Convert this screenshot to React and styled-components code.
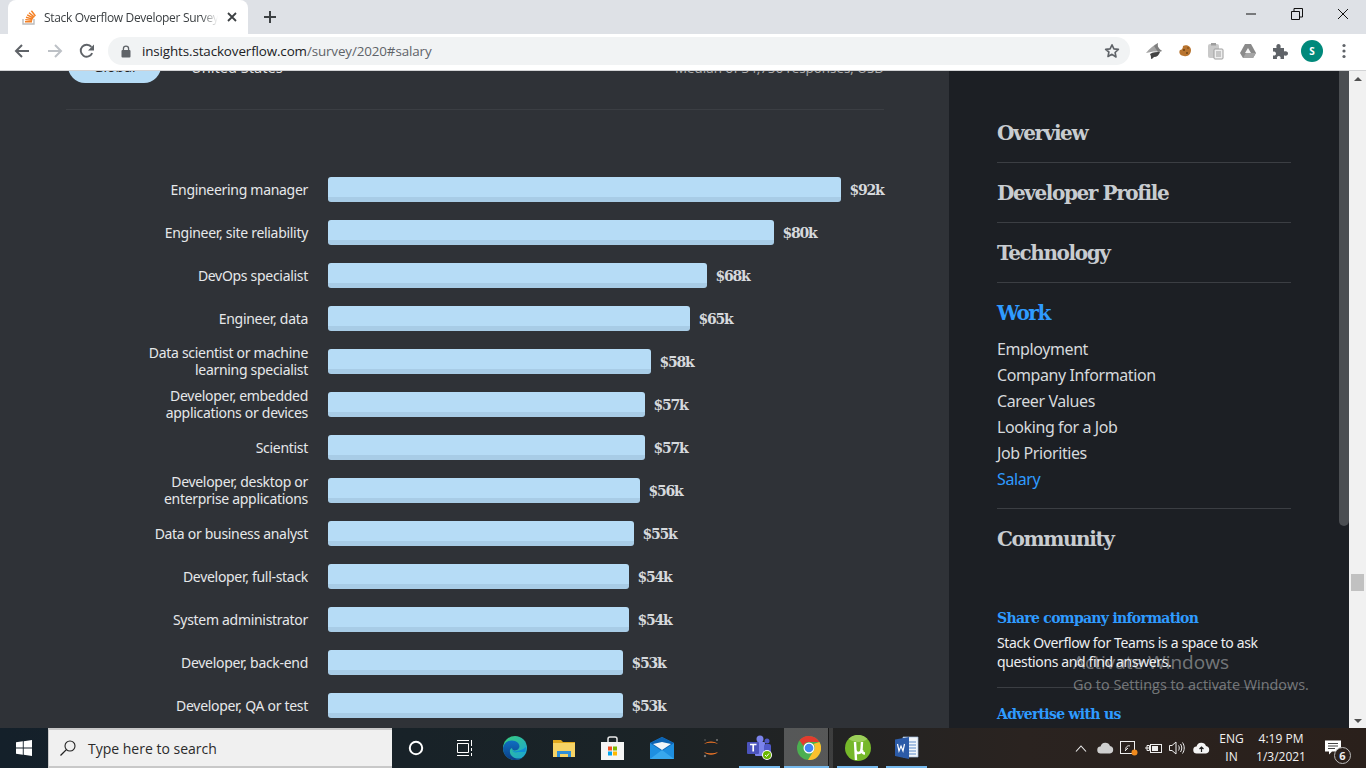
import React from "react";
import styled, { createGlobalStyle } from "styled-components";

const Global = createGlobalStyle`
  html, body { margin: 0; padding: 0; height: 100%; overflow: hidden; background: #2f3237; }
  * { box-sizing: border-box; }
  #root { height: 768px; }
`;

const UI = `"Open Sans", "Noto Sans", sans-serif`;
const BODY = `"Noto Sans", "Open Sans", sans-serif`;
const SLAB = `"DejaVu Serif", "Liberation Serif", serif`;

const Screen = styled.div`
  position: relative; width: 1366px; height: 768px; display: flex; flex-direction: column; overflow: hidden;
`;
const TabStrip = styled.div`
  height: 34px; background: #dee1e6; display: flex; align-items: flex-end; padding-left: 8px;
`;
const Tab = styled.div`
  width: 240px; height: 34px; background: #fff; border-radius: 8px 8px 0 0; display: flex; align-items: center; padding: 0 11px 0 13px;
`;
const TabTitle = styled.span`
  flex: 1; margin: 0 9px 0 7px; width: 170px; white-space: nowrap; overflow: hidden; font: 12px ${UI}; color: #3c4043; letter-spacing: -0.32px;
  -webkit-mask-image: linear-gradient(90deg, #000 90%, transparent 100%);
  mask-image: linear-gradient(90deg, #000 90%, transparent 100%);
`;
const NewTab = styled.div`
  width: 28px; height: 28px; margin-left: 8px; margin-bottom: 3px; display: flex; align-items: center; justify-content: center;
`;
const WindowControls = styled.div`
  margin-left: auto; height: 34px; display: flex;
`;
const WinBtn = styled.div`
  width: 46px; height: 28px; display: flex; align-items: center; justify-content: center;
`;
const Toolbar = styled.div`
  height: 37px; background: #fff; border-bottom: 1px solid #d2d3d5; display: flex; align-items: center; padding: 0 6px 2px 6px;
`;
const ToolBtn = styled.div`
  width: ${p => p.$w || 32}px; height: 28px; flex: none; display: flex; align-items: center; justify-content: center;
`;
const Address = styled.div`
  width: 1022px; height: 28px; margin: 0 8px 0 6px; border-radius: 14px; background: #f1f3f4; display: flex; align-items: center; padding: 0 10px 0 13px;
`;
const Url = styled.span`
  margin-left: 11px; flex: 1; font: 13.4px ${UI}; letter-spacing: -0.12px; color: #5f6368; white-space: nowrap;
  b { font-weight: 400; color: #202124; }
`;
const Avatar = styled.div`
  width: 22px; height: 22px; border-radius: 50%; background: #00897b; color: #fff; font: 700 10px ${UI}; display: flex; align-items: center; justify-content: center;
`;

const Viewport = styled.div`
  position: relative; flex: 1; min-height: 0; display: flex; overflow: hidden;
`;
const Article = styled.main`
  width: 949px; flex: none; background: #2f3237; padding-left: 66px; overflow: hidden;
`;
const Filters = styled.div`
  width: 818px; margin-top: -22px; padding-bottom: 26px; border-bottom: 1px solid #3b3e43; display: flex; align-items: center;
`;
const Pill = styled.div`
  width: 93px; height: 34px; margin-left: 2px; padding-top: 1px; border-radius: 17px; background: #b6dcf6; color: #222; font: 14px ${BODY}; display: flex; align-items: center; justify-content: center;
`;
const FilterText = styled.div`
  margin-left: 30px; padding-top: 1px; color: #ddd; font: 14.6px ${BODY};
`;
const FilterNote = styled.div`
  margin-left: auto; padding-top: 3px; color: #aaa; font: 13.3px ${BODY};
`;
const Chart = styled.div`
  padding-top: 67px; display: flex; flex-direction: column; gap: 18px;
`;
const Row = styled.div`
  display: flex; align-items: center; height: 25px;
`;
const Label = styled.div`
  width: 242px; flex: none; text-align: right; white-space: pre-line; font: 14px/17px ${BODY}; letter-spacing: -0.3px; color: #e6e8ea;
  ${p => p.$double ? "margin-top: -1px; margin-bottom: 1px;" : ""}
`;
const Bar = styled.div`
  height: 25px; margin-left: 20px; border-radius: 3px; background: #b6dcf6; border-bottom: 5px solid #a8cce6;
`;
const Value = styled.div`
  margin-left: 8.5px; font: 700 14px ${SLAB}; letter-spacing: -1.2px; color: #d6d9dc;
`;

const Side = styled.aside`
  width: 400px; flex: none; background: #1c1f24; padding-left: 48px; overflow: hidden;
`;
const SideInner = styled.div`
  width: 294px;
`;
const Section = styled.div`
  padding: ${p => p.$open ? "0 0 16px" : "0"};
  border-bottom: ${p => p.$last ? "0" : "1px solid #3b3e43"};
`;
const Heading = styled.div`
  height: ${p => p.$first ? "91px" : "59px"}; padding-top: ${p => p.$first ? "32px" : "0"}; font: 700 20px/61px ${SLAB}; letter-spacing: -1.4px;
  color: ${p => p.$active ? "#2f9bff" : "#c8ccd0"};
`;
const SubList = styled.div`
  display: flex; flex-direction: column; margin-top: -6px;
`;
const SubLink = styled.div`
  height: 26px; font: 16px/26px ${BODY}; letter-spacing: -0.4px; color: ${p => p.$active ? "#2f9bff" : "#d6d9dc"};
`;
const Promo = styled.div`
  margin-top: 40px;
`;
const PromoTitle = styled.div`
  font: 700 14px/20px ${SLAB}; letter-spacing: -0.7px; color: #2f9bff;
`;
const PromoText = styled.div`
  margin-top: 5px; padding-bottom: 16px; border-bottom: 1px solid #3b3e43; font: 14px/19px ${BODY}; letter-spacing: -0.37px; color: #eceef0; white-space: pre-line;
`;
const PromoNext = styled(PromoTitle)`
  margin-top: 16px;
`;
const PageThumb = styled.div`
  position: absolute; left: 1339px; top: 0; width: 10px; height: 455px; background: #4b4e52; border-radius: 0 0 5px 5px;
`;
const Track = styled.div`
  flex: 1; background: #f1f1f1; display: flex; flex-direction: column; align-items: center; justify-content: space-between; padding: 6px 0 5px; position: relative;
`;
const Arrow = styled.div`
  width: 0; height: 0; border-left: 4px solid transparent; border-right: 4px solid transparent;
  ${p => p.$up ? "border-bottom: 4px solid #505050;" : "border-top: 4px solid #505050;"}
`;
const TrackThumb = styled.div`
  position: absolute; left: 2px; top: 503px; width: 13px; height: 17px; background: #c1c1c1;
`;

const Taskbar = styled.footer`
  height: 40px; flex: none; display: flex; align-items: stretch; background: linear-gradient(90deg, #14202a 0%, #1a2327 45%, #2a2320 75%, #2a201b 100%);
`;
const Start = styled.div`
  width: 48px; display: flex; align-items: center; justify-content: center;
`;
const Search = styled.div`
  width: 344px; background: #f0f0f0; border: 2px solid #c8c8c8; border-right: 0; border-left-width: 1px; display: flex; align-items: center; padding-left: 11px;
  font: 14px ${UI}; color: #2b2b2b;
  span { margin-left: 12px; }
`;
const TaskBtn = styled.div`
  position: relative; width: ${p => p.$w || 49}px; flex: none; display: flex; align-items: center; justify-content: center;
  ${p => p.$current ? "background: linear-gradient(90deg, rgba(255,255,255,.24) 0 44px, rgba(0,0,0,.3) 44px 45px, rgba(255,255,255,.12) 45px);" : ""}
  ${p => p.$open ? `&::after { content: ""; position: absolute; left: ${p.$current ? 0 : 4}px; right: 4px; bottom: 0; height: 2px; background: #76b9ed; }` : ""}
`;
const Tray = styled.div`
  margin-left: auto; display: flex; align-items: stretch;
`;
const TrayIcon = styled.div`
  width: 24px; display: flex; align-items: center; justify-content: center;
`;
const TrayText = styled.div`
  width: ${p => p.$w}px; display: flex; flex-direction: column; align-items: center; justify-content: center; font: 12px/18px ${UI}; color: #f2f2f2;
`;
const Notify = styled.div`
  position: relative; width: 54px; display: flex; align-items: center; padding-left: 13px;
`;
const Badge = styled.div`
  position: absolute; left: 22px; top: 19px; width: 17px; height: 17px; border-radius: 50%; border: 1px solid #bbb; background: #2a201b; color: #eee; font: 700 11px/15px ${UI}; text-align: center;
`;
const Watermark = styled.div`
  position: absolute; left: 1073px; top: 648px; color: rgba(255,255,255,.4); font-family: ${UI}; pointer-events: none;
`;
const WmTitle = styled.div`font-size: 19px; line-height: 28px;`;
const WmSub = styled.div`font-size: 14.4px; line-height: 20px; margin-top: -1px; white-space: nowrap;`;

const rows = [
  ["Engineering manager", 513, "$92k"],
  ["Engineer, site reliability", 446, "$80k"],
  ["DevOps specialist", 379, "$68k"],
  ["Engineer, data", 362, "$65k"],
  ["Data scientist or machine\nlearning specialist", 323, "$58k"],
  ["Developer, embedded\napplications or devices", 317, "$57k"],
  ["Scientist", 317, "$57k"],
  ["Developer, desktop or\nenterprise applications", 312, "$56k"],
  ["Data or business analyst", 306, "$55k"],
  ["Developer, full-stack", 301, "$54k"],
  ["System administrator", 301, "$54k"],
  ["Developer, back-end", 295, "$53k"],
  ["Developer, QA or test", 295, "$53k"],
];
const subs = ["Employment", "Company Information", "Career Values", "Looking for a Job", "Job Priorities"];

const Ico = ({ s = 16, w, h, children, vb }) => (
  <svg width={w || s} height={h || s} viewBox={vb || `0 0 ${w || s} ${h || s}`} fill="none">{children}</svg>
);

const SOIcon = () => (
  <Ico s={16}>
    <path d="M2 10v5h11v-5" stroke="#bcbbbb" strokeWidth="1.4" />
    <path d="M4 12.7h7M4.3 10.6l6.9.7M5 8.3l6.7 1.8M6.2 5.9l6.2 3.1M8 3.8l5.4 4.3M10.4 1.8l4 5.2" stroke="#f48024" strokeWidth="1.4" />
  </Ico>
);
const XIcon = ({ s = 10, c = "#3c4043", sw = 1.8 }) => (
  <Ico s={s}><path d={`M1 1L${s - 1} ${s - 1}M${s - 1} 1L1 ${s - 1}`} stroke={c} strokeWidth={sw} /></Ico>
);
const Back = ({ c = "#5f6368", flip }) => (
  <Ico s={16}><g transform={flip ? "matrix(-1 0 0 1 16 0)" : undefined}><path d="M15 8H2.5M8 2L2 8l6 6" stroke={c} strokeWidth="2" /></g></Ico>
);
const Reload = () => (
  <Ico s={16}>
    <path d="M13.2 10.2A6 6 0 1 1 12.4 3.9" stroke="#5f6368" strokeWidth="1.9" />
    <path d="M15 1.5v6H9z" fill="#5f6368" />
  </Ico>
);
const Lock = () => (
  <Ico w={10} h={13}>
    <path d="M2.4 6V3.8a2.6 2.6 0 0 1 5.2 0V6" stroke="#5f6368" strokeWidth="1.3" />
    <rect x="0.5" y="5" width="9" height="7.5" rx="1" fill="#5f6368" />
  </Ico>
);
const Star = () => (
  <Ico s={16}><path d="M8 1.8l1.9 4.1 4.5.5-3.3 3.1.9 4.5L8 11.3l-4 2.2.9-4.5L1.6 6.4l4.5-.5z" stroke="#5f6368" strokeWidth="1.6" strokeLinejoin="round" /></Ico>
);
const ExtShark = () => (
  <Ico s={20}>
    <path d="M2 12C5 8 10 4 14 2c-1 3 0 5 4 8l-3 1c-4-1-8 0-13 1z" fill="#a3a3a3" />
    <path d="M10 5l4-3c-1 3 0 5 4 8l-4 1z" fill="#7d7d7d" />
    <path d="M6 13c3-2 7-2 10-2-1 3-3 5-6 5-1 1-2 2-3 2 0-2 0-3-1-5z" fill="#444" />
  </Ico>
);
const ExtCookie = () => (
  <Ico s={14}>
    <path d="M5 2c3-2 8 0 8 4 0 4-3 7-7 6C3 12 0 9 2 6c2 0 3-2 3-4z" fill="#b8742f" />
    <circle cx="6" cy="6" r="1" fill="#6e4316" /><circle cx="9" cy="9" r="1" fill="#6e4316" /><circle cx="10" cy="4" r=".8" fill="#6e4316" />
  </Ico>
);
const ExtClip = () => (
  <Ico s={18}>
    <rect x="1" y="2" width="11" height="14" rx="2" fill="#c9c9c9" />
    <rect x="4" y="1" width="5" height="2.5" fill="#9e9e9e" />
    <rect x="7" y="7" width="9" height="10" rx="1" fill="#eee" stroke="#9e9e9e" />
    <path d="M9 10h5M9 12h5M9 14h5" stroke="#9e9e9e" />
  </Ico>
);
const ExtDrive = () => (
  <Ico s={18}>
    <path d="M6 2h6l5 9-3 5H4l-3-5z" fill="#8a8a8a" />
    <path d="M9 6l3 5H6z" fill="#f5f5f5" />
    <path d="M4 16l3-5h10l-3 5z" fill="#a5a5a5" />
  </Ico>
);
const Puzzle = () => (
  <Ico s={16}>
    <path d="M1 5h3.500c-.6-3 .5-4 2-4s2.600 1 2 4H12v3.500c3-.6 4 .5 4 2s-1 2.600-4 2V16H8.500c.5-2.200-.5-3-1.700-3s-2.300.8-1.800 3H1v-3.500c2 .4 3-.5 3-1.800S3 8 1 8.700z" fill="#5f6368" />
  </Ico>
);
const Dots = () => (
  <Ico w={4} h={16}>
    <circle cx="2" cy="2.500" r="1.600" fill="#5f6368" /><circle cx="2" cy="8" r="1.600" fill="#5f6368" /><circle cx="2" cy="13.500" r="1.600" fill="#5f6368" />
  </Ico>
);
const Minimize = () => <Ico w={12} h={2}><path d="M1 1h10" stroke="#111" /></Ico>;
const Restore = () => (
  <Ico s={12}><path d="M.5 3.500h8v8h-8zM3 3.500V.5h8.500V9H8.500" stroke="#111" /></Ico>
);
const WinLogo = () => (
  <Ico s={16}><path d="M0 2.300L6.800 1.300v6.300H0zM7.700 1.200L16 0v7.600H7.700zM0 8.500h6.800v6.200L0 13.800zM7.700 8.500H16V16l-8.300-1.200z" fill="#fff" /></Ico>
);
const SearchGlass = () => (
  <Ico s={16}>
    <circle cx="10" cy="6" r="5" stroke="#222" strokeWidth="1.100" />
    <path d="M6.400 9.600L.5 15.500" stroke="#222" strokeWidth="1.300" />
  </Ico>
);
const Cortana = () => <Ico s={16}><circle cx="8" cy="8" r="6.200" stroke="#fff" strokeWidth="2" /></Ico>;
const TaskView = () => (
  <Ico s={16}>
    <path d="M.5 3.500h11v9H.5zM0 .5h12M0 15.500h12M14.500 0v6M14.500 8v3M14.500 13v3" stroke="#fff" />
  </Ico>
);
const Edge = () => (
  <svg width="24" height="24" viewBox="0 0 24 24">
    <defs>
      <linearGradient id="e1" x1="0" y1="0" x2="1" y2="1"><stop offset="0" stopColor="#3ad07a" /><stop offset="1" stopColor="#1aa0d8" /></linearGradient>
      <linearGradient id="e2" x1="0" y1="0" x2="0" y2="1"><stop offset="0" stopColor="#0f6fc2" /><stop offset="1" stopColor="#0c3f86" /></linearGradient>
    </defs>
    <circle cx="12" cy="12" r="12" fill="url(#e1)" />
    <path d="M0 12c1-6 7-9 12-7 5 2 6 7 2 9-3 1-5 0-5-2-3 1-3 6 1 9 3 2 8 2 11 0-2 2-6 3-9 3C5 24 0 19 0 12z" fill="url(#e2)" />
    <path d="M9 13c0 2 3 3 5 2 3-1 6-1 9-4 0 1 0 3-1 5h-7c-3 1-6 0-6-3z" fill="#0f8cd6" />
  </svg>
);
const Folder = () => (
  <svg width="22" height="18" viewBox="0 0 22 18">
    <path d="M0 1h8l2 2h12v15H0z" fill="#e0a81e" />
    <path d="M0 4h22v14H0z" fill="#f6d365" />
    <path d="M4 12h14v6h-3v-3H7v3H4z" fill="#2f8fd8" />
  </svg>
);
const Store = () => (
  <svg width="23" height="24" viewBox="0 0 23 24">
    <path d="M7 7V3a2 2 0 0 1 2-2h5a2 2 0 0 1 2 2v4" fill="none" stroke="#e8e8e8" strokeWidth="1.500" />
    <rect x="0" y="6" width="23" height="18" fill="#f5f5f5" />
    <rect x="7" y="10.500" width="4" height="4" fill="#f25022" /><rect x="12" y="10.500" width="4" height="4" fill="#7fba00" />
    <rect x="7" y="15.500" width="4" height="4" fill="#00a4ef" /><rect x="12" y="15.500" width="4" height="4" fill="#ffb900" />
  </svg>
);
const Mail = () => (
  <svg width="24" height="22" viewBox="0 0 24 22">
    <path d="M0 6L12 0l12 6v16H0z" fill="#1e8fe0" />
    <path d="M0 6l12 8 12-8-12-6z" fill="#0c63b3" />
    <path d="M3 7l9-2 9 2-9 6z" fill="#f2f6fa" />
    <path d="M0 22l12-9 12 9z" fill="#38a8ee" />
  </svg>
);
const Jupyter = () => (
  <svg width="18" height="22" viewBox="0 0 18 22">
    <path d="M2 7c3-3.500 11-3.500 14 0-4-1.800-10-1.800-14 0zM2 15c3 3.500 11 3.500 14 0-4 1.800-10 1.800-14 0z" fill="#f37726" />
    <circle cx="3" cy="19" r="1.200" fill="#777" /><circle cx="15" cy="3" r="1" fill="#777" /><circle cx="3" cy="3" r=".7" fill="#777" />
  </svg>
);
const Teams = () => (
  <svg width="26" height="26" viewBox="0 0 26 26">
    <circle cx="13" cy="4" r="3.500" fill="#7b83eb" /><circle cx="20" cy="6" r="2.500" fill="#5059c9" />
    <rect x="8" y="7" width="10" height="14" rx="1" fill="#7b83eb" />
    <rect x="17" y="9" width="7" height="9" rx="2" fill="#5059c9" />
    <rect x="0" y="7" width="12" height="12" rx="1" fill="#4b53bc" />
    <path d="M3 9.500h6.500M6.200 9.500v7" stroke="#fff" strokeWidth="1.700" />
    <circle cx="20" cy="20" r="5" fill="#fff" /><circle cx="20" cy="20" r="4" fill="#6bb700" />
    <path d="M18 20l1.500 1.500 2.500-3" stroke="#fff" fill="none" />
  </svg>
);
const ChromeLogo = () => (
  <svg width="24" height="24" viewBox="0 0 24 24">
    <circle cx="12" cy="12" r="12" fill="#4caf50" />
    <path d="M12 0a12 12 0 0 1 10.400 6H12a6 6 0 0 0-5.600 4L2.400 4.300A12 12 0 0 1 12 0z" fill="#e33b2e" />
    <path d="M22.400 6A12 12 0 0 1 11 24l5.200-8.500A6 6 0 0 0 16.500 8z" fill="#fbc02d" />
    <circle cx="12" cy="12" r="5.500" fill="#fff" /><circle cx="12" cy="12" r="4.300" fill="#4285f4" />
  </svg>
);
const Torrent = () => (
  <svg width="26" height="26" viewBox="0 0 26 26">
    <circle cx="13" cy="13" r="13" fill="#76b82a" />
    <path d="M3.500 4a13 13 0 0 1 19 0c-5 4-13 4-19 0z" fill="#9ccf5a" />
    <path d="M10 7l1 18M10.500 15c0 4 5.500 4 6 0l.5-8M17 15c0 2 .5 3.500 3 3.500" stroke="#fff" strokeWidth="2.400" fill="none" />
  </svg>
);
const Word = () => (
  <svg width="24" height="24" viewBox="0 0 24 24">
    <path d="M8 1h15v20H8z" fill="#f2f6fb" stroke="#9db7d8" strokeWidth=".7" />
    <path d="M14 6h7M14 9h7M14 12h7M14 15h7M14 18h7" stroke="#5b8ac9" />
    <path d="M0 3.500L14 1v22L0 20z" fill="#2c5ba8" />
    <path d="M2.500 8l1.500 7 2-5 2 5 1.500-7" stroke="#fff" strokeWidth="1.200" fill="none" />
  </svg>
);
const Chevron = () => <Ico w={12} h={7}><path d="M1 6.500L6 1l5 5.500" stroke="#eee" strokeWidth="1.100" /></Ico>;
const Cloud = ({ c = "#cfcfcf", arrow }) => (
  <Ico w={17} h={12}>
    <path d="M4 11.500a3.500 3.500 0 0 1-.5-7A5 5 0 0 1 13 4a3.800 3.800 0 0 1 0 7.500z" fill={c} />
    {arrow && <path d="M8.500 10V5M6.500 7l2-2 2 2" stroke="#222" strokeWidth="1.200" />}
  </Ico>
);
const Meet = () => (
  <Ico w={18} h={16}>
    <rect x=".5" y="1.500" width="14" height="12" stroke="#eee" />
    <path d="M6 10c-1-3 2-5 4-4M5 11l3-3" stroke="#eee" />
    <circle cx="14.500" cy="12.500" r="3" fill="#f08a1d" />
  </Ico>
);
const Battery = () => (
  <Ico w={17} h={12}>
    <rect x="5.500" y="2.500" width="11" height="8" stroke="#eee" />
    <rect x="7" y="4" width="6" height="5" fill="#eee" />
    <path d="M0 6h4M2 3.500v5h2.500v-5z" stroke="#eee" />
  </Ico>
);
const Speaker = () => (
  <Ico w={16} h={14}>
    <path d="M.5 4.500h2.500L7 1v12L3 9.500H.5z" stroke="#eee" />
    <path d="M9.500 4.500c1 1.500 1 3.500 0 5M11.500 3c1.700 2.500 1.700 5.500 0 8M13.500 1.500c2.300 3.300 2.300 7.700 0 11" stroke="#eee" />
  </Ico>
);
const Comment = () => (
  <Ico w={16} h={16}>
    <path d="M0 .5h16v11H7l-3 3v-3H0z" fill="#fff" />
    <path d="M3 3.500h10M3 6h10M3 8.500h7" stroke="#444" />
  </Ico>
);

export default function App() {
  return (
    <Screen>
      <Global />
      <TabStrip>
        <Tab>
          <SOIcon />
          <TabTitle>Stack Overflow Developer Survey 2020</TabTitle>
          <XIcon />
        </Tab>
        <NewTab>
          <Ico s={14}><path d="M7 1v12M1 7h12" stroke="#3c4043" strokeWidth="2" /></Ico>
        </NewTab>
        <WindowControls>
          <WinBtn><Minimize /></WinBtn>
          <WinBtn><Restore /></WinBtn>
          <WinBtn><XIcon s={12} c="#111" sw={1} /></WinBtn>
        </WindowControls>
      </TabStrip>
      <Toolbar>
        <ToolBtn><Back /></ToolBtn>
        <ToolBtn $w={33}><Back flip c="#bdc1c6" /></ToolBtn>
        <ToolBtn $w={31}><Reload /></ToolBtn>
        <Address>
          <Lock />
          <Url><b>insights.stackoverflow.com</b>/survey/2020#salary</Url>
          <Star />
        </Address>
        <ToolBtn $w={31}><ExtShark /></ToolBtn>
        <ToolBtn $w={31}><ExtCookie /></ToolBtn>
        <ToolBtn $w={32}><ExtClip /></ToolBtn>
        <ToolBtn $w={32}><ExtDrive /></ToolBtn>
        <ToolBtn $w={32}><Puzzle /></ToolBtn>
        <ToolBtn $w={32}><Avatar>S</Avatar></ToolBtn>
        <ToolBtn $w={32}><Dots /></ToolBtn>
      </Toolbar>
      <Viewport>
        <Article>
          <Filters>
            <Pill>Global</Pill>
            <FilterText>United States</FilterText>
            <FilterNote>Median of 34,756 responses; USD</FilterNote>
          </Filters>
          <Chart>
            {rows.map(([label, width, value]) => (
              <Row key={label}>
                <Label $double={label.includes("\n")}>{label}</Label>
                <Bar style={{ width }} />
                <Value>{value}</Value>
              </Row>
            ))}
          </Chart>
        </Article>
        <Side>
          <SideInner>
            <Section><Heading $first>Overview</Heading></Section>
            <Section><Heading>Developer Profile</Heading></Section>
            <Section><Heading>Technology</Heading></Section>
            <Section $open>
              <Heading $active>Work</Heading>
              <SubList>
                {subs.map(s => <SubLink key={s}>{s}</SubLink>)}
                <SubLink $active>Salary</SubLink>
              </SubList>
            </Section>
            <Section $last><Heading>Community</Heading></Section>
            <Promo>
              <PromoTitle>Share company information</PromoTitle>
              <PromoText>{"Stack Overflow for Teams is a space to ask\nquestions and find answers."}</PromoText>
              <PromoNext>Advertise with us</PromoNext>
            </Promo>
          </SideInner>
        </Side>
        <PageThumb />
        <Track>
          <Arrow $up />
          <TrackThumb />
          <Arrow />
        </Track>
      </Viewport>
      <Taskbar>
        <Start><WinLogo /></Start>
        <Search><SearchGlass /><span>Type here to search</span></Search>
        <TaskBtn $w={48}><Cortana /></TaskBtn>
        <TaskBtn $w={50}><TaskView /></TaskBtn>
        <TaskBtn><Edge /></TaskBtn>
        <TaskBtn><Folder /></TaskBtn>
        <TaskBtn><Store /></TaskBtn>
        <TaskBtn><Mail /></TaskBtn>
        <TaskBtn><Jupyter /></TaskBtn>
        <TaskBtn $open><Teams /></TaskBtn>
        <TaskBtn $open $current><ChromeLogo /></TaskBtn>
        <TaskBtn $open><Torrent /></TaskBtn>
        <TaskBtn $open><Word /></TaskBtn>
        <Tray>
          <TrayIcon><Chevron /></TrayIcon>
          <TrayIcon><Cloud /></TrayIcon>
          <TrayIcon><Meet /></TrayIcon>
          <TrayIcon><Battery /></TrayIcon>
          <TrayIcon><Speaker /></TrayIcon>
          <TrayIcon><Cloud c="#f4f4f4" arrow /></TrayIcon>
          <TrayText $w={37}><span>ENG</span><span>IN</span></TrayText>
          <TrayText $w={62}><span>4:19 PM</span><span>1/3/2021</span></TrayText>
          <Notify><Comment /><Badge>6</Badge></Notify>
        </Tray>
      </Taskbar>
      <Watermark>
        <WmTitle>Activate Windows</WmTitle>
        <WmSub>Go to Settings to activate Windows.</WmSub>
      </Watermark>
    </Screen>
  );
}
